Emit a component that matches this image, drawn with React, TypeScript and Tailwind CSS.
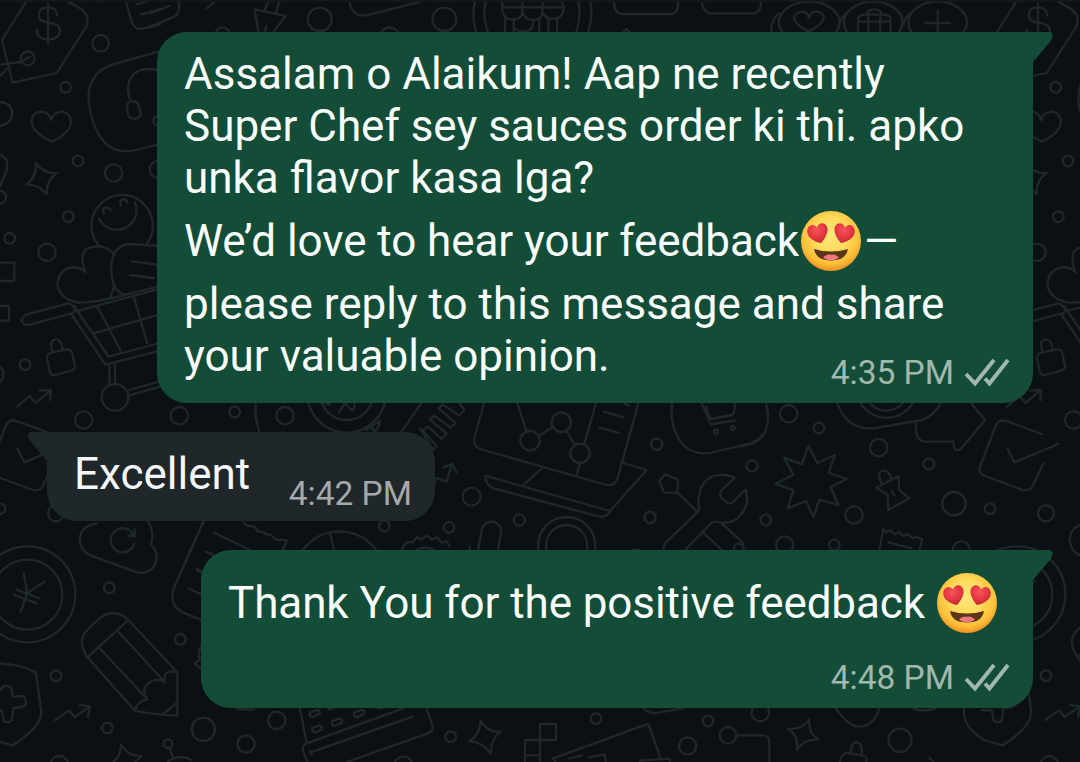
import type { ReactNode } from "react";

type Dot = [number, number, number];

function Dots({ items }: { items: Dot[] }) {
  return (
    <>
      {items.map(([x, y, r]) => (
        <circle key={`${x}-${y}`} cx={x} cy={y} r={r} />
      ))}
    </>
  );
}

/* Doodles of the wallpaper's left edge, which come back 990px to the right. */
function EdgeDoodles() {
  return (
    <>
      <g transform="scale(.33333)">
        <path d="M82 0 L6 120 L38 248 L170 219 L260 78 Q270 48 244 27 L195 0" />
        <path d="M144 10 V130 M172 46 Q170 22 144 22 Q116 22 116 46 Q116 64 144 68 Q180 72 180 92 Q180 118 144 118 Q112 118 110 90" />
        <path d="M0 194 L60 186 L90 170 M0 228 L28 200" />
        <path d="M155 425 Q95 396 95 364 Q97 337 124 335 Q147 336 153 360 Q160 336 187 335 Q212 340 213 366 Q210 400 155 425Z" />
        <path d="M107 489 Q130 522 170 519 Q138 540 140 583 Q116 552 78 554 Q110 532 107 489Z" />
        <path d="M480 154 L346 191 C278 209 252 262 272 340 C292 425 334 463 400 452 L480 432" />
        <path d="M392 305 C375 260 386 224 422 210 Q445 203 480 212 M382 325 Q378 305 398 303 Q414 303 418 325 L422 338 Q422 356 402 357 Q386 354 384 340Z" />
        <path d="M296 736 A92 92 0 1 1 440 732 M298 656 A57 57 0 0 0 404 606 M312 641 Q304 623 320 622 Q330 622 332 632 M363 618 Q355 600 370 598 Q380 598 382 608" />
        <path d="M256 817 Q236 760 262 746 Q310 726 344 763 M256 817 Q242 800 215 802 Q176 808 172 855 Q180 898 236 908 Q290 908 378 884 M480 738 L390 732 Q345 734 335 785 Q328 878 378 884 L480 858 M395 784 L480 795 M390 825 L462 834 M343 857 L330 896" />
        <path d="M205 910 L78 944 Q60 956 68 968 Q76 978 90 974 L220 939 Q235 924 205 910Z M222 918 L326 1070 L480 1029 M214 942 L316 1094 L480 1052 M236 932 L480 866 M290 916 L362 1052 M400 886 L442 1030 M280 1000 L480 943 M328 1094 V1152 M345 1090 V1152 M388 1170 L480 1144 M388 1186 L480 1160" />
        <path d="M158 1056 Q145 1020 168 1018 Q184 1018 188 1048 M155 1058 L200 1048 Q214 1047 217 1060 L225 1098 Q226 1109 215 1112 L165 1125 Q152 1126 149 1112 L141 1076 Q140 1061 155 1058Z" />
        <path d="M52 1220 L88 1188 L107 1209 L151 1171 M119 1172 L152 1170 L151 1201" />
        <path d="M0 788 H43 V843 H0 M0 918 H27 V962 H0 M0 306 Q36 310 37 340 Q36 370 0 378 M0 464 Q28 475 20 510 L0 560 M0 572 Q19 578 18 592 Q18 608 0 612 M0 1102 Q12 1110 10 1124 Q10 1140 0 1146" />
        <path d="M376 0 L396 68 Q405 88 425 87 L480 73 M410 14 L440 4 M422 44 L480 27" />
        <Dots items={[[302,130,25],[83,175,21],[197,262,16],[234,483,16],[341,519,26],[475,508,26],[205,650,16],[29,715,16],[141,757,26],[345,1192,40],[75,1094,16],[251,1260,26],[474,362,14],[305,-13,17]]} />
      </g>
      <g transform="translate(0 400) scale(.33333)">
        <path d="M52 145 L73 187 L205 132 M155 102 L52 64 Q28 56 18 75 L-30 200 Q-36 220 -15 228 L98 270 Q122 276 132 250 L160 190" />
        <path d="M290 370 Q240 378 239 420 Q242 456 272 466 L405 515 Q446 528 464 495 Q480 460 453 434 Q464 395 445 365 M403 430 A36 36 0 1 1 400 404 M385 408 H404 V388" />
        <circle cx="82" cy="583" r="144" />
        <circle cx="82" cy="584" r="105" />
        <path d="M71 519 L82 580 L134 544 M82 580 L62 636 M49 569 L116 594 M43 585 L110 610" />
        <path d="M262 772 L405 932 Q455 944 532 947 V817 L385 660 Q340 618 292 660 L258 694 Q232 724 262 772Z M262 772 L385 660 M296 742 L442 898 M352 692 L494 846 M405 932 Q412 902 442 898 Q420 865 450 846 Q470 832 494 846 Q488 808 528 815 M490 942 L532 908" />
        <path d="M0 790 Q70 795 108 818 L124 938 Q120 985 38 1036 L-20 1020 M4 870 Q4 858 18 857 Q34 858 35 870 L38 890 L66 888 Q78 892 78 908 Q76 920 64 921 L40 924 L37 956 Q34 966 24 967 Q10 966 10 956 L6 932 L-25 930" />
        <path d="M-17 1020 C-50 1000 -80 975 -78 930 L-76 905" />
        <path d="M166 960 L207 931 L224 951 L270 919 M240 915 L270 919 L264 951" />
        <path d="M363 1034 Q385 1071 425 1068 L405 1086 M363 1034 Q362 1068 340 1086" />
        <path d="M610 366 L519 570 Q510 620 550 638 L610 662 M617 454 L640 465 M592 512 L620 525 M566 566 L620 590" />
        <path d="M604 740 Q590 755 600 778 L584 790 L604 808" />
        <Dots items={[[168,340,24],[0,326,16],[328,563,16],[541,718,16],[168,827,16],[322,984,16],[178,1094,26],[504,1031,13],[610,988,35],[538,47,26]]} />
        <path d="M508 1043 L520 1075 M505 1084 Q540 1060 575 1080" />
      </g>
    </>
  );
}

function Wallpaper() {
  return (
    <svg
      className="absolute inset-0 h-full w-full fill-none stroke-[#20272b] stroke-[2.3px] [&_*]:[vector-effect:non-scaling-stroke]"
      viewBox="0 0 1080 762"
      strokeLinecap="round"
      strokeLinejoin="round"
      aria-hidden="true"
    >
      <EdgeDoodles />
      <g transform="translate(990 0)">
        <EdgeDoodles />
      </g>
      {/* strip above the first message */}
      <g transform="translate(150 0) scale(.5421 .33333)">
        <path d="M0 80 L45 50 Q58 35 52 0 M0 40 L36 18 M104 26 L120 4 M220 0 L211 32 M240 0 L232 38 M193 28 L250 48 L228 95 M193 28 L200 95 M215 78 L210 100 M368 0 Q370 50 398 46 L500 5" />
        <path d="M600 0 Q592 50 602 98 M620 0 Q612 50 624 98 M790 0 Q796 50 786 98 M812 0 Q818 50 808 98 M650 8 V36 Q655 60 670 58 Q686 58 687 36 Q692 60 707 60 Q724 58 724 36 Q730 58 744 56 Q764 54 763 20 L760 6 M650 22 H762 M687 6 V36 M724 6 V36 M655 52 V98 M671 58 V98 M671 80 Q675 95 690 95 Q707 94 707 62 M718 60 V98 M735 58 V98 M751 55 V98" />
        <path d="M856 6 Q856 40 872 42 H962 Q976 38 974 6 M1018 6 Q1020 38 1034 40 H1114 Q1128 36 1127 6 M872 98 L879 87 L886 98" />
        <path d="M1215 95 Q1186 70 1188 50 Q1194 34 1207 36 Q1214 40 1215 54 Q1218 34 1230 34 Q1243 38 1243 52 Q1242 72 1215 95Z M1306 98 V55 Q1308 44 1318 44 H1354 Q1366 46 1366 56 V98 M1306 65 H1366 M1325 44 V98 M1347 44 V98 M1323 44 Q1323 28 1336 28 Q1349 28 1349 44 M1453 32 V105 M1430 69 H1476 M1160 40 Q1144 62 1146 98 M1284 40 Q1272 60 1272 74 M1402 40 Q1390 60 1390 74" />
        <ellipse cx="313" cy="58" rx="22" ry="35" />
        <ellipse cx="543" cy="58" rx="22" ry="35" />
        <ellipse cx="1216" cy="67" rx="56" ry="62" />
        <ellipse cx="1334" cy="67" rx="54" ry="62" />
        <ellipse cx="1453" cy="67" rx="54" ry="62" />
        <ellipse cx="134" cy="106" rx="14" ry="24" />
        <ellipse cx="442" cy="112" rx="18" ry="30" />
      </g>
      {/* band between the first and the second message */}
      <g transform="translate(150 390) scale(.33333)">
        <path d="M318 35 Q312 80 328 125 M820 30 L755 125" />
        <circle cx="590" cy="10" r="118" />
        <circle cx="590" cy="10" r="80" />
        <path d="M568 66 L585 38 L606 62 Q614 58 614 40 M520 38 L540 44 M648 120 L690 92 Q688 112 676 124 M665 112 L676 126" />
        <path d="M160 395 L95 540 M192 428 L300 480 M168 486 L195 498 M140 536 L155 543 M280 396 Q290 412 304 408 Q318 408 322 424 Q342 422 348 434 Q362 430 376 448 L411 451 L398 480" />
        <path d="M455 484 Q500 424 570 424 Q640 426 682 484 M540 430 L552 480 M755 478 L770 456 L786 458 L800 442 L815 448 L830 436 L846 448 L862 442 L874 458 L890 454 L898 468 M800 480 Q830 466 850 480" />
        <Dots items={[[254,66,16],[405,77,26],[703,408,16],[897,412,16]]} />
      </g>
      <g transform="translate(420 395) scale(.33333)">
        <path d="M0 100 L40 164 L50 154 L8 106 L24 94 L64 132 L80 116 L30 74 L42 62 L92 98 L106 84 L56 40 L68 28 L118 62 L134 44 L118 25" />
        <path d="M45 262 L50 248 L80 260 L96 206 M70 218 L96 206 L110 232" />
        <path d="M192 25 L162 132 Q160 154 180 162 L560 270 Q585 274 592 252 L655 25 M292 25 L320 110 M355 124 L400 95 M438 106 L466 152 M492 148 L528 25 M480 205 L470 238 M552 50 L610 67 M536 97 L598 114 M615 27 L628 32" />
        <path d="M370 216 L310 270 M610 204 L680 225 L570 348 Q560 370 535 364 L220 280 Q195 268 196 242 L570 348" />
        <path d="M174 465 L186 402 Q194 380 216 380 Q242 384 244 408 L234 465 M149 455 V465" />
        <path d="M756 25 Q748 100 790 150 Q820 180 870 174 L970 150 Q1005 143 1022 125 M845 25 L872 88 L946 76 M858 35 L868 66 L872 72 L935 60 Q946 56 944 25" />
        <path d="M732 465 Q728 450 740 440 L838 346 C828 290 850 235 910 240 Q930 240 945 248 L904 286 Q896 300 908 312 L925 325 L936 324 L975 285 Q988 310 976 340 Q950 390 895 382 Q880 376 870 388 L795 465 M850 412 L905 465 M905 385 L965 440 Q972 450 970 465 M830 348 L772 292 M736 238 L774 254 L772 294 L732 292 L718 258Z" />
        <circle cx="440" cy="452" r="86" />
        <circle cx="440" cy="452" r="62" />
        <circle cx="888" cy="110" r="6" />
        <circle cx="938" cy="99" r="6" />
        <Dots items={[[330,137,29],[424,82,29],[480,175,29],[155,305,27],[298,375,17],[710,148,17],[690,367,17],[996,213,17],[648,490,27]]} />
      </g>
      <g transform="translate(740 395) scale(.33333)">
        <path d="M205 152 L232 204 L285 180 L266 234 L320 252 L272 276 L295 330 L238 314 L220 366 L198 318 L143 340 L160 286 L106 266 L160 240 L132 188 L186 208Z" />
        <path d="M78 25 Q95 90 65 126 Q45 150 0 153 M292 25 C310 75 345 104 400 100 L545 75 Q580 65 602 25 M362 25 A92 92 0 0 0 518 25 M390 25 A66 66 0 0 0 488 25 M528 78 V110 Q534 140 556 140 H640 Q640 172 660 164 L735 76 L694 25" />
        <path d="M409 278 L475 243 L478 286 L509 310 L444 345 V300Z M454 287 L463 302 M424 264 Q408 226 432 226 Q448 228 453 250" />
        <path d="M418 465 L430 402 L440 412 L452 406 L464 418 L478 412 L490 424 L504 417 L518 430 L530 426 L547 432 L538 465 M445 442 L515 460 M0 360 Q30 330 18 284 L0 300" />
        <Dots items={[[146,56,26],[237,99,16],[416,158,26],[567,207,16],[342,360,26],[77,375,16],[642,326,35],[134,450,26],[283,450,16],[664,465,26],[-4,460,14]]} />
      </g>
      {/* strip below the last message */}
      <g transform="translate(200 700) scale(.33333)">
        <path d="M300 25 L320 130 M322 186 L308 150 Q306 138 320 130 L610 25 M330 158 L638 50 M680 25 L698 80 Q700 94 684 100 L440 186 M330 154 L336 164 M110 28 H162" />
        <path d="M330 38 L350 30 Q360 30 360 40 L338 52 Q328 50 330 38Z M396 64 L418 55 Q428 56 426 68 L404 78 Q394 76 396 64Z M462 38 L484 30 Q494 32 492 42 L470 52 Q460 50 462 38Z M337 84 L358 76 Q368 78 366 88 L346 98 Q336 96 337 84Z M386 28 L402 24 M534 26 L550 22" />
        <path d="M842 62 Q862 98 902 95 Q872 118 872 160 Q846 124 808 124 Q840 104 842 62Z M1020 72 H1068 V120 H975 V186 M1020 72 V186 M975 166 H1020 M1320 80 L1060 175 L1066 186 M1108 176 L1145 166 M1165 172 L1214 164 L1218 186" />
        <Dots items={[[230,61,26],[138,132,26],[752,110,16],[1188,56,16],[610,195,26]]} />
      </g>
      <g transform="translate(640 700) scale(.33333)">
        <path d="M12 25 Q25 42 55 38 L130 25 M0 80 L25 72 L62 176 M0 182 L90 176 V186 M290 106 H370 Q388 108 388 126 V186 M508 58 Q504 100 535 118 Q492 116 470 150 Q478 108 444 86 Q486 90 508 58Z M588 25 Q625 80 660 80 Q705 76 717 25 M820 25 Q850 38 885 25 M600 186 Q604 160 620 158 L672 168 Q684 172 678 186 M632 156 Q634 128 650 126 Q670 130 664 164 M868 174 L880 184" />
        <Dots items={[[204,63,16],[361,38,26],[143,138,26],[264,106,25],[780,121,35]]} />
      </g>
    </svg>
  );
}

function HeartEyes({ id, className }: { id: string; className: string }) {
  return (
    <svg viewBox="0 0 60 60" className={className} role="img" aria-label="😍">
      <defs>
        <radialGradient id={`${id}-face`} cx=".5" cy=".4" r=".62">
          <stop offset="0" stopColor="#fee67c" />
          <stop offset=".45" stopColor="#fddb5c" />
          <stop offset=".78" stopColor="#fcbf38" />
          <stop offset="1" stopColor="#ee8a1e" />
        </radialGradient>
        <radialGradient id={`${id}-heart`} cx=".45" cy=".35" r=".7">
          <stop offset="0" stopColor="#f4545a" />
          <stop offset=".6" stopColor="#e2363f" />
          <stop offset="1" stopColor="#b82432" />
        </radialGradient>
      </defs>
      <circle cx="30" cy="30" r="30" fill={`url(#${id}-face)`} />
      <path
        d="M20 32 C14 31 6 27 6.2 20 C6.6 13.5 13 12 16 16.5 C17.5 11 25 10.5 26.4 17 C27.3 22.5 23.5 28 20 32Z"
        fill={`url(#${id}-heart)`}
      />
      <path
        d="M40 32 C46 31 54 27 53.8 20 C53.4 13.5 47 12 44 16.5 C42.5 11 35 10.5 33.6 17 C32.7 22.5 36.5 28 40 32Z"
        fill={`url(#${id}-heart)`}
      />
      <path d="M13 38 Q30 43 47 38 Q45 49.5 30 49.5 Q15 49.5 13 38Z" fill="#5a3517" />
      <path d="M22 46.3 Q26 42.8 30 43.8 Q34 42.8 38 46.3 Q35 49.2 30 49.2 Q25 49.2 22 46.3Z" fill="#f0787f" />
    </svg>
  );
}

function ReadTicks() {
  return (
    <svg viewBox="0 0 46 30" className="h-[30px] w-[46px] fill-none stroke-[#a1b8af] stroke-[3.9px]" aria-hidden="true">
      <path d="M2 16 L11 25.5 L30 2" />
      <path d="M21 20.5 L25.5 25.5 L44 2" />
    </svg>
  );
}

function SentBubble({ className, children }: { className: string; children: ReactNode }) {
  return (
    <article
      className={`relative self-end rounded-[30px] rounded-tr-none bg-[#144d37] pt-4 pr-[23px] text-[44px] leading-[52px] text-[#f8fbfa] ${className}`}
    >
      <svg viewBox="0 0 20 31" className="absolute top-0 -right-5 h-[31px] w-5 fill-[#144d37]" aria-hidden="true">
        <path d="M0 0 H16 Q19.5 0 19.5 4 Q19.5 6 18 8.5 L0 30Z" />
      </svg>
      {children}
    </article>
  );
}

function SentTime({ time, className }: { time: string; className: string }) {
  return (
    <footer className={`flex items-center justify-end gap-2.5 text-[33.5px] leading-10 text-[#a1b8af] ${className}`}>
      <time>{time}</time>
      <ReadTicks />
    </footer>
  );
}

export default function App() {
  return (
    <div className="relative h-[762px] w-[1080px] overflow-hidden bg-[#0a1014] font-['Roboto',sans-serif]">
      <Wallpaper />
      <div className="absolute inset-x-0 top-0 h-0.5 bg-[#11171b]" />
      <main className="relative flex flex-col pt-8 pr-[47px] pl-[47px] whitespace-nowrap">
        <SentBubble className="h-[371px] w-[876px] pl-[27px]">
          <p>Assalam o Alaikum! Aap ne recently</p>
          <p>Super Chef sey sauces order ki thi. apko</p>
          <p>unka flavor kasa lga?</p>
          <p className="flex h-[74px] items-center tracking-[-0.07px]">
            We’d love to hear your feedback
            <HeartEyes id="first" className="ml-0.5 h-[60px] w-[60px]" />
            <span className="ml-[3px]">—</span>
          </p>
          <p>please reply to this message and share</p>
          <p>your valuable opinion.</p>
          <SentTime time="4:35 PM" className="-mt-[29px]" />
        </SentBubble>

        <article className="relative mt-[29px] flex h-[89px] w-[388px] items-start justify-between self-start rounded-[30px] rounded-tl-none bg-[#1f272a] pr-[23px] pl-[27px] text-[44px] text-[#f5f6f7]">
          <svg viewBox="0 0 20 31" className="absolute top-0 -left-[19px] h-[31px] w-5 fill-[#1f272a]" aria-hidden="true">
            <path d="M20 0 H4 Q0 0 0 4 Q0 6 2 9 L20 30Z" />
          </svg>
          <p className="pt-4 leading-[52px]">Excellent</p>
          <time className="pt-[42px] text-[33.5px] leading-10 text-[#a5a9aa]">4:42 PM</time>
        </article>

        <SentBubble className="mt-[29px] h-[158px] w-[832px] pl-[27px]">
          <p className="flex h-[74px] items-center tracking-[-0.09px]">
            Thank You for the positive feedback
            <HeartEyes id="second" className="ml-3 h-[60px] w-[60px]" />
          </p>
          <SentTime time="4:48 PM" className="mt-[18px]" />
        </SentBubble>
      </main>
    </div>
  );
}
